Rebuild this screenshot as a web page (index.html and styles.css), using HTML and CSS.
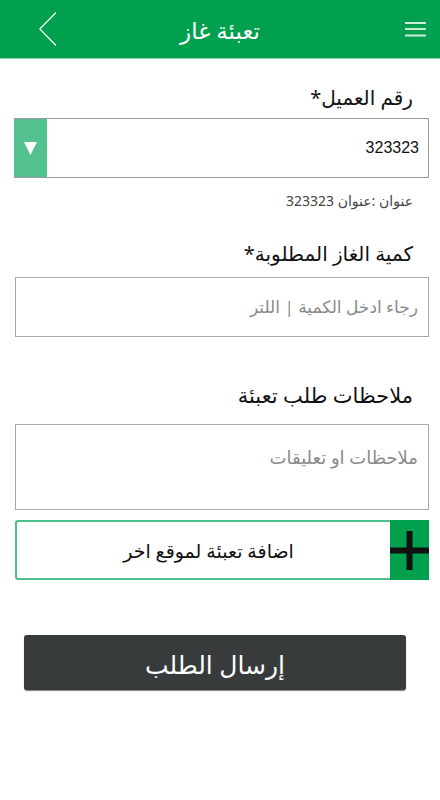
FILE: index.html
```html
<!DOCTYPE html>
<html lang="ar" dir="rtl">
<head>
<meta charset="utf-8">
<title>تعبئة غاز</title>
<link rel="stylesheet" href="styles.css">
</head>
<body>
<header class="topbar">
  <div class="menu-cell">
    <svg class="menu-icon" width="21" height="15" viewBox="0 0 21 15">
      <rect x="0" y="0" width="21" height="2" fill="#c9ecd8"/>
      <rect x="0" y="6" width="21" height="2" fill="#c9ecd8"/>
      <rect x="0" y="12.5" width="21" height="2" fill="#c9ecd8"/>
    </svg>
  </div>
  <h1 class="title">تعبئة غاز</h1>
  <div class="back-cell">
    <svg class="back-icon" width="18" height="34" viewBox="0 0 18 34">
      <polyline points="17,0.5 0.8,17 17,33.5" fill="none" stroke="#ffffff" stroke-width="1.2"/>
    </svg>
  </div>
</header>

<main class="form">
  <div class="label label-first">رقم العميل*</div>
  <div class="select">
    <span class="select-value">323323</span>
    <span class="select-arrow">
      <svg width="13" height="13" viewBox="0 0 13 13"><polygon points="0,0 13,0 6.5,13" fill="#ffffff"/></svg>
    </span>
  </div>
  <div class="address">عنوان :عنوان 323323</div>

  <div class="label label-qty">كمية الغاز المطلوبة*</div>
  <div class="field field-qty"><span class="placeholder">رجاء ادخل الكمية | اللتر</span></div>

  <div class="label label-notes">ملاحظات طلب تعبئة</div>
  <div class="field field-notes"><span class="placeholder placeholder-notes">ملاحظات او تعليقات</span></div>

  <div class="add-btn">
    <span class="add-icon">
      <svg width="39" height="39" viewBox="0 0 39 39">
        <rect x="16.5" y="0" width="6" height="39" fill="#111"/>
        <rect x="0" y="16.5" width="39" height="6" fill="#111"/>
      </svg>
    </span>
    <span class="add-text">اضافة تعبئة لموقع اخر</span>
  </div>

  <div class="submit">إرسال الطلب</div>
</main>
</body>
</html>
```

FILE: styles.css
```css
* { box-sizing: border-box; }
html, body { margin: 0; padding: 0; }
body {
  width: 440px;
  height: 800px;
  background: #ffffff;
  font-family: "Noto Sans", "DejaVu Sans", sans-serif;
  color: #111;
  direction: rtl;
  overflow: hidden;
}
.topbar {
  height: 59px;
  background: #00a04f;
  border-bottom: 1px solid #8fd3ae;
  display: grid;
  grid-template-columns: 1fr auto 1fr;
  align-items: center;
}
.menu-cell {
  display: flex;
  justify-content: flex-start;
  padding-right: 14px;
  padding-top: 1px;
}
.menu-icon { display: block; }
.title {
  margin: 0;
  color: #ffffff;
  font-size: 23px;
  font-weight: normal;
  line-height: 30px;
  padding-top: 2px;
}
.back-cell {
  display: flex;
  justify-content: flex-end;
  padding-left: 39px;
}
.back-icon { display: block; }

.form {
  display: flex;
  flex-direction: column;
  padding: 0 11px 0 15px;
}
.label {
  font-size: 20px;
  line-height: 28px;
  padding-right: 16px;
  color: #111;
}
.label-first { margin-top: 25px; }
.select {
  margin-top: 6px;
  margin-left: -1px;
  height: 60px;
  border: 1px solid #9a9a9a;
  border-left: none;
  display: flex;
  align-items: center;
  justify-content: space-between;
}
.select-value {
  font-family: "Liberation Sans", Arial, sans-serif;
  font-size: 16px;
  padding-right: 9px;
  color: #111;
}
.select-arrow {
  width: 33px;
  height: 100%;
  background: #52c18d;
  display: flex;
  align-items: center;
  justify-content: center;
}
.select-arrow svg { display: block; }
.address {
  margin-top: 14px;
  font-size: 14px;
  line-height: 18px;
  color: #444;
  padding-right: 16px;
}
.label-qty { margin-top: 30px; }
.field {
  border: 1px solid #a8a8a8;
  display: flex;
  padding-right: 10px;
}
.field-qty {
  margin-top: 9px;
  height: 60px;
  align-items: center;
}
.field-notes {
  margin-top: 15px;
  height: 86px;
  align-items: flex-start;
  padding-top: 20px;
}
.placeholder {
  font-size: 17px;
  line-height: 24px;
  color: #8a8a8a;
}
.placeholder-notes { font-size: 18px; }
.label-notes { margin-top: 44px; font-size: 21px; }

.add-btn {
  margin-top: 10px;
  height: 60px;
  border: 2px solid #4cbf8a;
  border-right: none;
  border-radius: 3px;
  display: flex;
  align-items: stretch;
}
.add-icon {
  width: 39px;
  margin-top: -2px;
  margin-bottom: -2px;
  background: #00a04f;
  display: flex;
  align-items: center;
  justify-content: center;
}
.add-icon svg { display: block; }
.add-text {
  flex: 1;
  display: flex;
  align-items: center;
  justify-content: center;
  font-size: 19px;
  color: #111;
  padding-left: 10px;
  padding-top: 2px;
}
.submit {
  margin-top: 55px;
  margin-left: 9px;
  margin-right: 23px;
  height: 55px;
  background: #373b3c;
  border-radius: 3px;
  box-shadow: 0 1px 1px rgba(0,0,0,0.5);
  color: #ffffff;
  font-size: 25px;
  display: flex;
  align-items: center;
  justify-content: center;
  padding-top: 2px;
}
```
